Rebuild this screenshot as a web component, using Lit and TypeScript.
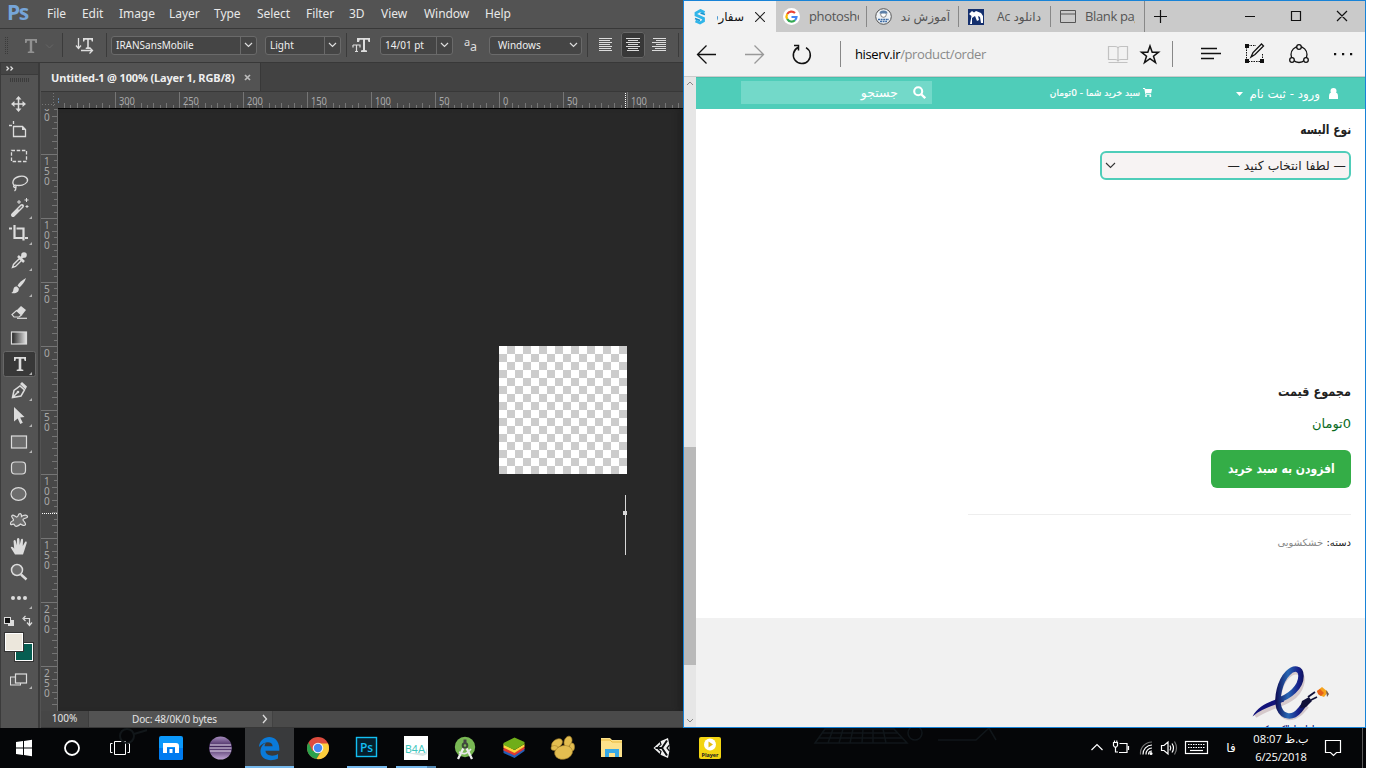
import { LitElement, html, svg, css } from "lit";
import { customElement } from "lit/decorators.js";

const range = (n: number) => Array.from({ length: n }, (_, i) => i);

/* ---------- Photoshop tools, each drawn in a 38x26 cell ---------- */
const corner = svg`<path d="M32 24h-3l3-3z" fill="#b4b4b4"/>`;
const tools = [
  { icon: svg`<path d="M18.500 7v12M12.500 13h12" stroke="#dcdcdc" stroke-width="1.500" fill="none"/><path d="M18.500 5l3 3.500h-6zM18.500 21l3-3.500h-6zM11 13l3.500-3v6zM26 13l-3.500-3v6z" fill="#dcdcdc"/>`, more: false },
  { icon: svg`<path d="M13.500 4v3M9 8.500h3M13.500 9.500h9l3 3v7h-12z" stroke="#dcdcdc" stroke-width="1.300" fill="none"/><path d="M22 9v4h4z" fill="#dcdcdc"/>`, more: false },
  { icon: svg`<rect x="11.500" y="7.500" width="15" height="11" fill="none" stroke="#dcdcdc" stroke-width="1.300" stroke-dasharray="3.500 1.700"/>`, more: false },
  { icon: svg`<path d="M15 17c-4-3-2-8 4-9.500s10 2 8 5.500c-2 3-7 4-11 3.200-2-.5-3 .8-2 2s3-.5 1.500-1.500M16 18c0 2 0 3-1.500 4" stroke="#dcdcdc" stroke-width="1.300" fill="none"/>`, more: false },
  { icon: svg`<path d="M13 20l9-9" stroke="#dcdcdc" stroke-width="4" stroke-linecap="round"/><path d="M18.500 14.500l3.500-3.500" stroke="#6a6a6a" stroke-width="1.500"/><path d="M19 5v4M17 7h4M26.500 3v4M24.500 5h4M27 10v3M25.500 11.500h3" stroke="#dcdcdc" stroke-width="1"/>`, more: true },
  { icon: svg`<path d="M14.500 4v13h9M9 7.500h3M16.500 7.500h7v12M25 17h3" stroke="#dcdcdc" stroke-width="2.200" fill="none"/>`, more: true },
  { icon: svg`<path d="M12.500 20.500l1-3 6-6 2 2-6 6z" fill="none" stroke="#dcdcdc" stroke-width="1.400"/><path d="M18 9l6 6M20.500 11.500l3.500-3.500" stroke="#dcdcdc" stroke-width="2.500"/><circle cx="24" cy="8" r="2.800" fill="#dcdcdc"/>`, more: true },
  { icon: svg`<path d="M26 5c-4 2-7 5-8.500 7.500l2 2C22 12 25 9 26 5z" fill="#dcdcdc"/><path d="M17 13.500c-2.500-.5-3.500 1.500-3.700 3.500-.2 1.500-1 2.500-2 3 4 1 8-.5 7.500-4.500z" fill="#dcdcdc"/>`, more: true },
  { icon: svg`<path d="M21 7l5 4-4 5h-6l-2-2z" fill="#dcdcdc"/><path d="M16.500 11.500l5 4.500-2.500 2h-5l-2-2.500z" fill="#535353" stroke="#dcdcdc" stroke-width="1.200"/><path d="M17 19.300h10" stroke="#dcdcdc" stroke-width="1.200"/>`, more: false },
  { icon: svg`<defs><linearGradient id="g"><stop offset="0" stop-color="#222"/><stop offset="1" stop-color="#e4e4e4"/></linearGradient></defs><rect x="11.500" y="7" width="15" height="12" fill="url(#g)" stroke="#dcdcdc" stroke-width="1.200"/>`, more: false },
  { icon: svg`<rect x="3.500" y=".5" width="32" height="25" rx="2" fill="#383838" stroke="#676767"/><path d="M14 6h12v4h-1.300l-.7-2.300h-2.700v10.500l2 .6V20h-6.600v-1.200l2-.6V7.700H16L15.300 10H14z" fill="#dcdcdc"/>`, more: true },
  { icon: svg`<path d="M12.500 20.500l1.500-7 6-4.500 4.500 4-3.500 6zM12.500 20.500l5-5" stroke="#dcdcdc" stroke-width="1.500" fill="none"/><circle cx="18" cy="15" r="1.300" fill="#dcdcdc"/><path d="M20 7l2-2 5 4.500-1.500 3z" fill="#dcdcdc"/>`, more: true },
  { icon: svg`<path d="M14 4l10.500 10-4.300.4 2.600 5.400-2.600 1.200-2.500-5.400L14 18.500z" fill="#dcdcdc"/>`, more: true },
  { icon: svg`<rect x="11.500" y="7" width="15" height="12" fill="#6d6d6d" stroke="#dcdcdc" stroke-width="1.200"/>`, more: true },
  { icon: svg`<rect x="11.500" y="7" width="14" height="12" rx="3.500" fill="#6d6d6d" stroke="#dcdcdc" stroke-width="1.200"/>`, more: false },
  { icon: svg`<ellipse cx="18.500" cy="13" rx="7.500" ry="6.300" fill="#6d6d6d" stroke="#dcdcdc" stroke-width="1.200"/>`, more: false },
  { icon: svg`<path d="M19 7c2-1 2.500.5 2.500 2.500 2-1.500 5.500-2 6 0s-4 1.500-4.500 3 3 2.500 2.500 5c-1 2-3.500.5-5-.5-2 2-5 3.500-6 1s-4 1.500-4-1.500 3-2 3-3.500-3-3-1.500-4.500 3.500 2 5 1.500S18 8 19 7z" fill="#6d6d6d" stroke="#dcdcdc" stroke-width="1.200"/>`, more: false },
  { icon: svg`<path d="M15 21.500l-4.300-7c1-1.500 2.500-.3 3.500 1.200L13.500 8c.8-1.500 2-1 2.300.2l.9 4L17 6c.5-1.400 2-1.300 2.400 0l.3 6 1.300-5.500c.6-1.200 2-.9 2 .5L22.800 13l2.200-4c1-1 2-.3 1.700 1L24.500 17 23 21.500z" fill="#dcdcdc"/>`, more: false },
  { icon: svg`<circle cx="17" cy="11" r="5.500" fill="#6d6d6d" stroke="#dcdcdc" stroke-width="1.500"/><path d="M21 15.500l5.500 5" stroke="#dcdcdc" stroke-width="2.400"/>`, more: false },
  { icon: svg`<circle cx="13" cy="13" r="2" fill="#dcdcdc"/><circle cx="19" cy="13" r="2" fill="#dcdcdc"/><circle cx="25" cy="13" r="2" fill="#dcdcdc"/>`, more: true },
];

const down = (c: string) => html`<svg width="9" height="6" viewBox="0 0 9 6"><path d="M1 1l3.500 3.500L8 1" fill="none" stroke=${c} stroke-width="1.200"/></svg>`;
const lines = (rows: number[][]) => html`<svg width="24" height="26" viewBox="0 0 24 26">${rows.map(([x, w], i) => svg`<rect x=${x} y=${6 + i * 2} width=${w} height="1" fill="#dcdcdc"/>`)}</svg>`;

@customElement("photoshop-window")
export class PhotoshopWindow extends LitElement {
  static styles = css`
    :host { display: grid; grid-template-rows: 28px 35px 1fr; width: 683px; height: 728px; background: #535353; color: #dedede; font: 11px "Noto Sans", sans-serif; overflow: hidden; box-sizing: border-box; }
    svg { display: block; flex: none; }
    .menu { display: flex; align-items: center; font-size: 12px; color: #e8e8e8; letter-spacing: -.05px; padding-bottom: 1px; box-sizing: border-box; }
    .logo { width: 40px; padding-left: 7px; box-sizing: border-box; font: bold 21px/27px "Open Sans", sans-serif; color: #76a5d8; letter-spacing: -1.500px; margin-top: -2px; }
    .menu .m { box-sizing: border-box; flex: none; white-space: nowrap; }
    .w0 { width: 35px; margin-left: 7px; } .w1 { width: 37px; } .w2 { width: 50px; } .w3 { width: 45px; } .w4 { width: 43px; }
    .w5 { width: 49px; } .w6 { width: 43px; } .w7 { width: 32px; } .w8 { width: 43px; } .w9 { width: 61px; } .w10 { width: 50px; }
    .options { border-top: 1px solid #383838; border-bottom: 1px solid #383838; display: flex; align-items: center; padding-bottom: 1px; box-sizing: border-box; }
    .box { height: 19px; border: 1px solid #6a6a6a; border-radius: 3px; background: #454545; display: flex; align-items: center; box-sizing: border-box; color: #f0f0f0; font-size: 10px; }
    .box .v { flex: 1; padding-left: 4px; white-space: nowrap; }
    .box .a { width: 15px; height: 100%; border-left: 1px solid #6a6a6a; display: flex; align-items: center; justify-content: center; }
    .box .plain { border: 0; }
    .sep { width: 1px; height: 24px; background: #3b3b3b; flex: none; }
    .font { width: 146px; margin: 0 8px 0 4px; }
    .weight { width: 76px; margin-right: 5px; }
    .size { width: 73px; margin: 0 11px 0 9px; }
    .aa { width: 93px; margin: 0 5px 0 11px; }
    .aa .v { padding-left: 8px; }
    .on { background: #383838; border-radius: 3px; outline: 1px solid #676767; outline-offset: -1px; margin: 0 2px 0 9px; }
    .last { margin-left: 7px; }
    .main { display: grid; grid-template-columns: 41px 1fr; min-height: 0; }
    .tools { border-right: 2px solid #3b3b3b; border-left: 1px solid #3b3b3b; box-sizing: border-box; width: 40px; }
    .head { height: 12px; background: #454545; border-bottom: 1px solid #3b3b3b; display: flex; align-items: center; padding-left: 4px; box-sizing: border-box; }
    .grip { height: 16px; display: flex; justify-content: center; padding-top: 3px; box-sizing: border-box; }
    .doc { display: grid; grid-template-rows: 29px 17px 602px 17px; min-width: 0; }
    .tabs { background: #424242; border-bottom: 1px solid #383838; display: flex; }
    .tab { width: 220px; box-sizing: border-box; background: #535353; border-right: 1px solid #383838; padding-left: 10px; display: flex; align-items: center; gap: 9px; font-weight: bold; font-size: 11px; letter-spacing: -.15px; color: #efefef; white-space: nowrap; }
    .view { display: grid; grid-template-columns: 17px 1fr; }
    .canvas { background: #282828; position: relative; box-shadow: inset -8px 0 8px -6px #1c1c1c; }
    .art { position: absolute; left: 441px; top: 237px; width: 128px; height: 128px; background: repeating-conic-gradient(#ccc 0 25%, #fff 0 50%) 0 0 / 16px 16px; }
    .caret { position: absolute; left: 565px; top: 386px; }
    .status { display: flex; background: #4a4a4a; font-size: 10px; border-bottom: 1px solid #383838; color: #e4e4e4; box-sizing: border-box; }
    .status .zoom { width: 47px; background: #464646; text-align: center; line-height: 15px; border-right: 1px solid #3d3d3d; }
    .status .info { width: 184px; background: #535353; display: flex; align-items: center; justify-content: space-between; padding: 0 4px 0 43px; box-sizing: border-box; border-right: 1px solid #424242; letter-spacing: -.15px; }
    .lab { font: 10px "Noto Sans", sans-serif; fill: #a9a9a9; }
  `;

  hRuler() {
    const majors = range(9).map((i) => ({ x: 74 + i * 64, n: Math.abs(300 - i * 50) }));
    return html`<svg width="642" height="17" viewBox="0 0 642 17">
      <rect width="642" height="17" fill="#484848"/>
      <path d="M1 12.500h15M12.500 1v15" stroke="#777" stroke-dasharray="1 2"/>
      <path d="M17.500 6v6" stroke="#5f86ad" stroke-dasharray="2 1"/>
      ${range(98).map((i) => { const x = Math.round(74 + (i - 8) * 6.4); return x < 17 ? null : svg`<rect x=${x} y=${i % 2 ? 13 : 11} width="1" height="5" fill="#757575"/>`; })}
      ${majors.map((m) => svg`<rect x=${m.x} y="0" width="1" height="16" fill="#757575"/><text class="lab" x=${m.x + 4} y="13" textLength=${String(m.n).length * 5.300} lengthAdjust="spacingAndGlyphs">${m.n}</text>`)}
      <path d="M584.500 1v15" stroke="#fff" stroke-dasharray="1 1"/>
      <rect y="16" x="17" width="625" height="1" fill="#000"/></svg>`;
  }

  vRuler() {
    const majors = range(10).map((i) => ({ y: -19 + i * 64, n: String(Math.abs(200 - i * 50)) }));
    return html`<svg width="17" height="602" viewBox="0 0 17 602">
      <rect width="17" height="602" fill="#484848"/>
      ${range(97).map((i) => svg`<rect x=${i % 2 ? 13 : 11} y=${Math.round(-19 + i * 6.4)} width="5" height="1" fill="#757575"/>`)}
      ${majors.map((m) => svg`<rect y=${m.y} x="0" width="17" height="1" fill="#757575"/>${m.n.split("").map((d, k) => m.y < 0 && k === 0 ? null : svg`<text class="lab" x="3" y=${m.y + 11 + k * 10}>${d}</text>`)}`)}
      <path d="M1 404.500h15" stroke="#fff" stroke-dasharray="1 1"/>
      <rect x="16" width="1" height="602" fill="#6d6d6d"/></svg>`;
  }

  render() {
    const menus = ["File", "Edit", "Image", "Layer", "Type", "Select", "Filter", "3D", "View", "Window", "Help"];
    return html`
      <div class="menu"><span class="logo">Ps</span>${menus.map((m, i) => html`<span class="m w${i}">${m}</span>`)}</div>
      <div class="options">
        <svg width="62" height="32" viewBox="0 0 62 32"><path d="M5.500 8v18M7.500 8v18" stroke="#3b3b3b" stroke-dasharray="1 1"/><path d="M25 10h12v4h-1.500l-.8-2.300h-2.500v10.500l2 .6V24h-6.400v-1.200l2-.6V11.700h-2.500l-.8 2.300H25z" fill="#919191"/><path d="M46 15.500l3.500 3.500 3.500-3.500" stroke="#666" fill="none"/></svg>
        <div class="sep"></div>
        <svg width="43" height="32" viewBox="0 0 43 32"><path d="M20 9h10v3.500h-1.200l-.6-1.800h-2.400v7.600l1.500.5v1.200h-4.600v-1.200l1.500-.5v-7.600h-2.400l-.6 1.800H20z" fill="#dedede"/><path d="M15.500 9v10M13 16.500l2.500 3 2.500-3M18 21.500h11M26.500 18.500l3 3-3 3" stroke="#dedede" stroke-width="1.300" fill="none"/></svg>
        <div class="sep"></div>
        <div class="box font"><span class="v">IRANSansMobile</span><span class="a">${down("#dedede")}</span></div>
        <div class="box weight"><span class="v">Light</span><span class="a">${down("#dedede")}</span></div>
        <div class="sep"></div>
        <svg width="24" height="32" viewBox="0 0 24 32"><path d="M10 9h13v4h-1.500l-.7-2.200H18V21l2 .6V23h-6v-1.400l2-.6V10.800h-3.200L12 13h-2z" fill="#dedede"/><path d="M6 16h7v2.500M6 18.500V16M9.500 16v6.500M8 22.500h3" stroke="#dedede" stroke-width="1.200" fill="none"/></svg>
        <div class="box size"><span class="v">14/01 pt</span><span class="a">${down("#dedede")}</span></div>
        <svg width="14" height="32" viewBox="0 0 14 32"><text x="0" y="17" font-size="11" fill="#dedede">a</text><text x="6" y="22" font-size="12.500" fill="#dedede">a</text></svg>
        <div class="box aa"><span class="v">Windows</span><span class="a plain">${down("#dedede")}</span></div>
        <div class="sep"></div>
        ${lines([[11, 13], [11, 11], [11, 14], [11, 11], [11, 14], [11, 12], [11, 14]])}
        <div class="on">${lines([[5, 14], [7, 10], [5, 14], [7, 10], [5, 14], [7, 10], [6, 12]])}</div>
        ${lines([[6, 13], [9, 10], [5, 14], [9, 10], [5, 14], [8, 11], [5, 14]])}
        <div class="sep last"></div>
      </div>
      <div class="main">
        <div class="tools">
          <div class="head"><svg width="10" height="7" viewBox="0 0 10 7"><path d="M1.500 1.500l2 2-2 2M5.500 1.500l2 2-2 2" fill="none" stroke="#e0e0e0" stroke-width="1.300"/></svg></div>
          <div class="grip"><svg width="20" height="4" viewBox="0 0 20 4"><path d="M0 1h20M0 3h20" stroke="#3b3b3b" stroke-dasharray="1 1" stroke-width="2"/></svg></div>
          ${tools.map((t) => html`<svg width="37" height="26" viewBox="1 0 37 26">${t.icon}${t.more ? corner : null}</svg>`)}
          <svg width="37" height="86" viewBox="1 611 37 86">
            <rect x="8" y="620" width="6" height="6" fill="#dcdcdc"/><rect x="4.500" y="617.500" width="6" height="6" fill="#111" stroke="#dcdcdc"/>
            <path d="M24 618.500h5.500v6M25.500 616l-2.500 2.500 2.500 2.500M27 622.500l2.500 3 2.500-3" stroke="#dcdcdc" stroke-width="1.200" fill="none"/>
            <rect x="14" y="642" width="20" height="20" fill="#333"/><rect x="15.500" y="643.500" width="17" height="17" fill="#065e52" stroke="#fff"/>
            <rect x="4" y="632" width="20" height="20" fill="#333"/><rect x="5.500" y="633.500" width="17" height="17" fill="#ece7dc" stroke="#fff"/>
            <rect x="10.500" y="677" width="10" height="8" fill="#5f5f5f" stroke="#dcdcdc"/><rect x="15.500" y="674" width="11" height="9" fill="#535353" stroke="#dcdcdc" stroke-width="1.200"/><path d="M32 689h-3l3-3z" fill="#b4b4b4"/>
          </svg>
        </div>
        <div class="doc">
          <div class="tabs"><div class="tab">Untitled-1 @ 100% (Layer 1, RGB/8)<svg width="7" height="7" viewBox="0 0 7 7"><path d="M1 1l5 5M6 1L1 6" stroke="#bbb" stroke-width="1.700"/></svg></div></div>
          ${this.hRuler()}
          <div class="view">${this.vRuler()}
            <div class="canvas"><div class="art"></div>
              <svg class="caret" width="5" height="60" viewBox="0 0 5 60"><path d="M2.500 0v60" stroke="#d8d8d8"/><rect y="16" width="4" height="4" fill="#d8d8d8"/></svg></div>
          </div>
          <div class="status"><div class="zoom">100%</div><div class="info"><span>Doc: 48/0K/0 bytes</span><svg width="6" height="10" viewBox="0 0 6 10"><path d="M1 1l3.500 4L1 9" fill="none" stroke="#ddd" stroke-width="1.300"/></svg></div></div>
        </div>
      </div>`;
  }
}

@customElement("browser-window")
export class BrowserWindow extends LitElement {
  static styles = css`
    :host { display: grid; grid-template-rows: 31px 45px 1fr; width: 683px; height: 728px; box-sizing: border-box; border: 1px solid #1883d7; background: #fff; font: 13px "Open Sans", "DejaVu Sans", sans-serif; color: #000; overflow: hidden; }
    svg { display: block; flex: none; }
    .tabs { background: #cacaca; display: flex; align-items: center; }
    .tab { display: flex; align-items: center; height: 21px; padding-left: 7px; box-sizing: border-box; color: #555; border-right: 1px solid #888; gap: 9px; }
    .tab .t { width: 50px; overflow: hidden; white-space: nowrap; line-height: 21px; letter-spacing: -.35px; }
    .tab .ar { direction: rtl; font-size: 12px; letter-spacing: 0; }
    .active { width: 92px; height: 31px; background: #f2f2f2; border: 0; padding-left: 8px; color: #111; }
    .active .t { width: 27px; }
    .active .close { margin-left: 2px; }
    .t2 { width: 91px; } .t3 { width: 92px; padding-left: 8px; gap: 8px; } .t4 { width: 92px; padding-left: 9px; } .t5 { width: 94px; height: 31px; padding-left: 9px; }
    .t4 .t { width: 48px; }
    .bar { background: #f2f2f2; border-bottom: 1px solid #ccc; display: flex; align-items: center; }
    .url { width: 252px; font-size: 13px; letter-spacing: -.38px; padding-left: 14px; color: #8a8a8a; white-space: nowrap; box-sizing: border-box; }
    .url b { font-weight: normal; color: #000; }
    .sep { width: 1px; height: 26px; background: #888; }
    .body { display: grid; grid-template-columns: 12px 1fr; min-height: 0; }
    .scroll { background: #e6e6e6; display: flex; flex-direction: column; align-items: center; justify-content: space-between; padding: 4px 0; position: relative; }
    .thumb { position: absolute; left: 0; top: 370px; width: 12px; height: 218px; background: #b9b9b9; }
    .page { direction: rtl; font-family: "DejaVu Sans", sans-serif; display: flex; flex-direction: column; min-width: 0; }
    .top { height: 32px; background: #4fcdb9; color: #fff; display: flex; align-items: center; box-sizing: border-box; border-top: 1px solid #47bfac; }
    .user { display: flex; align-items: center; gap: 9px; margin-right: 27px; width: 101px; font-size: 11.800px; white-space: nowrap; }
    .user .caret { margin-right: -2px; }
    .basket { display: flex; align-items: center; gap: 3px; margin-right: 85px; width: 102px; font-size: 9.500px; white-space: nowrap; margin-top: -3px; -webkit-text-stroke: .2px #fff; }
    .basket .n { transform: scaleX(.95); transform-origin: right; }
    .search { width: 191px; height: 23px; background: #73d9c9; margin-right: 118px; display: flex; align-items: center; gap: 15px; padding-right: 6px; box-sizing: border-box; font-size: 12.500px; margin-top: -2px; }
    .form { height: 509px; padding: 11px 14px 0 0; box-sizing: border-box; display: flex; flex-direction: column; align-items: flex-start; color: #222; }
    .label { font-weight: bold; font-size: 13px; line-height: 20px; transform: scaleX(.82); transform-origin: right; }
    .total { transform: scaleX(.87); }
    .select { width: 251px; height: 29px; box-sizing: border-box; border: 2px solid #4fcdb9; border-radius: 6px; background: #f7f3f3; margin: 11px 0 202px; display: flex; align-items: center; justify-content: space-between; padding: 0 3px; font-size: 12.400px; }
    .price { font-size: 13px; color: #0a6b1e; line-height: 20px; margin: 12px 0 16px; }
    .buy { width: 140px; height: 38px; border-radius: 6px; background: #34ad47; color: #fff; font-weight: bold; font-size: 13px; display: flex; align-items: center; justify-content: center; white-space: nowrap; padding-bottom: 2px; box-sizing: border-box; }
    .buy .n { transform: scaleX(.83); }
    .rule { width: 383px; height: 1px; background: #eee; margin: 26px 0 18px; }
    .cat { font-size: 10px; line-height: 20px; color: #888; }
    .cat b { font-weight: normal; color: #222; }
    .foot { flex: 1; background: #f1f1f1; display: flex; padding-right: 33px; align-items: flex-end; }
  `;

  render() {
    return html`
      <div class="tabs">
        <div class="tab active">
          <svg width="16" height="16" viewBox="0 0 16 16"><path d="M12.500 3.500L8.500 1.500 4 4v2l7.500 3.500V12L8 14l-4.500-2" fill="none" stroke="#2fb5e9" stroke-width="2.800"/><path d="M13 5.500L8.500 4M3 9.500l5 2" stroke="#1593cf" stroke-width="1.600"/></svg>
          <span class="t ar">سفارش</span>
          <svg class="close" width="10" height="10" viewBox="0 0 10 10"><path d="M0 0l10 10M10 0L0 10" stroke="#222" stroke-width="1.100"/></svg>
        </div>
        <div class="tab t2"><svg width="17" height="17" viewBox="0 0 17 17"><circle cx="8.500" cy="8.500" r="8.500" fill="#fff"/><g fill="none" stroke-width="2.200"><path d="M12 5A5 5 0 0 0 4.200 6" stroke="#ea4335"/><path d="M4.200 6a5 5 0 0 0 0 5" stroke="#fbbc05"/><path d="M4.200 11A5 5 0 0 0 12 12.200" stroke="#34a853"/><path d="M12 12.200A5 5 0 0 0 13.500 9H8.500" stroke="#4285f4"/></g></svg><span class="t">photoshop</span></div>
        <div class="tab t3"><svg width="17" height="17" viewBox="0 0 17 17"><circle cx="8.500" cy="8.500" r="7.800" fill="#eef2f6" stroke="#555" stroke-width="1"/><circle cx="8.500" cy="6.500" r="2.800" fill="#fff" stroke="#666" stroke-width=".8"/><path d="M4.500 5.500a4 3 0 0 1 8 0z" fill="#5b7fa8"/><path d="M3 11.500h11M5 13.500h7" stroke="#3d6ca5" stroke-width="1.300" stroke-dasharray="2 .6"/></svg><span class="t ar">آموزش ند</span></div>
        <div class="tab t4"><svg width="16" height="16" viewBox="0 0 16 16"><rect width="16" height="16" fill="#15306e"/><path d="M1 5l3-3 2 1.500L8 2l5 2 2 3v7h-2l-1-6-2-1 1 4-2 1-2-5-3 2v6H2l1.500-8z" fill="#fff"/></svg><span class="t ar">دانلود Ac</span></div>
        <div class="tab t5"><svg width="16" height="14" viewBox="0 0 16 14"><path d="M.5.500h15v12H.5zM.5 4h15" fill="none" stroke="#555"/></svg><span class="t">Blank page</span></div>
        <svg width="220" height="31" viewBox="1145 1 220 31"><path d="M1154 16.500h13M1160.500 10v13M1245 16.500h10M1291.500 11.500h9v9h-9zM1337 11l10 10M1347 11l-10 10" fill="none" stroke="#111" stroke-width="1.200"/></svg>
      </div>
      <div class="bar">
        <svg width="156" height="44" viewBox="684 32 156 44"><path d="M716 54.500h-18M706.500 45.500l-9 9 9 9" fill="none" stroke="#111" stroke-width="1.300"/><path d="M745 54.500h18M754.500 45.500l9 9-9 9" fill="none" stroke="#999" stroke-width="1.300"/><path d="M798 47.500a8.500 8.500 0 1 0 8 .2M794 45.500h4.500v5" fill="none" stroke="#111" stroke-width="1.500"/></svg>
        <div class="sep"></div>
        <div class="url"><b>hiserv.ir</b>/product/order</div>
        <svg width="272" height="44" viewBox="1093 32 272 44">
          <path d="M1108.500 46.500h6.500c2 0 3 1 3 2v13c0-1.500-1-2-3-2h-6.500zM1127.500 46.500h-6.500c-2 0-3 1-3 2v13c0-1.500 1-2 3-2h6.500zM1108.500 62.500h19" fill="none" stroke="#c2c2c2" stroke-width="1.200"/>
          <path d="M1150 46l2.200 6.200h6.300l-5 4 2 6.300-5.500-3.900-5.500 3.900 2-6.300-5-4h6.300z" fill="none" stroke="#111" stroke-width="1.500"/>
          <path d="M1172.500 41v26" stroke="#888"/>
          <path d="M1201 48.500h16M1201 53.500h20M1201 58.500h13" stroke="#111" stroke-width="1.300"/>
          <path d="M1246.500 47v14M1246 61.500h16M1262.500 54v7M1248 45.500h8" stroke="#111" stroke-dasharray="1.500 1" fill="none"/><path d="M1245 44h4v4h-4zM1245 59h4v4h-4zM1260 59h4v4h-4z" fill="#111"/><path d="M1251 57l2-4.500 8.500-8.500 2 2-8.500 8.500z" fill="#f2f2f2" stroke="#111" stroke-width="1.300"/>
          <g fill="none" stroke="#111" stroke-width="1.300"><circle cx="1299" cy="54.500" r="8"/><g fill="#f2f2f2"><circle cx="1299" cy="47" r="2.300"/><circle cx="1292" cy="60" r="2.300"/><circle cx="1306" cy="60" r="2.300"/></g></g>
          <path d="M1334 53h2.200v2.200h-2.200zM1342 53h2.200v2.200h-2.200zM1350 53h2.200v2.200h-2.200z" fill="#111"/>
        </svg>
      </div>
      <div class="body">
        <div class="scroll"><svg width="8" height="5" viewBox="0 0 8 5"><path d="M1 4l3-3 3 3" fill="none" stroke="#888"/></svg><div class="thumb"></div><svg width="8" height="5" viewBox="0 0 8 5"><path d="M1 1l3 3 3-3" fill="none" stroke="#888"/></svg></div>
        <div class="page">
          <div class="top">
            <div class="user"><svg width="9" height="11" viewBox="0 0 9 11"><circle cx="4.500" cy="3" r="3" fill="#fff"/><path d="M0 11V8.500Q0 5 2 4.800h5Q9 5 9 8.500V11z" fill="#fff"/></svg><span>ورود - ثبت نام</span><svg class="caret" width="7" height="4" viewBox="0 0 7 4"><path d="M0 0h7L3.500 4z" fill="#fff"/></svg></div>
            <div class="basket"><svg width="9" height="9" viewBox="0 0 9 9"><path d="M0 0h2l.3 1H9L8.200 5.200H3l.2.800H8v.8H2.400L1.400 1H0z" fill="#fff"/><circle cx="3" cy="8" r="1" fill="#fff"/><circle cx="7.300" cy="8" r="1" fill="#fff"/></svg><span class="n">سبد خرید شما - 0تومان</span></div>
            <div class="search"><svg width="13" height="13" viewBox="0 0 13 13"><circle cx="5.200" cy="5.200" r="4" fill="none" stroke="#fff" stroke-width="2.100"/><path d="M8.200 8.200l4 4" stroke="#fff" stroke-width="2.300"/></svg><span>جستجو</span></div>
          </div>
          <div class="form">
            <div class="label">نوع البسه</div>
            <div class="select"><span>— لطفا انتخاب کنید —</span><svg width="11" height="7" viewBox="0 0 11 7"><path d="M1 1l4.500 4.500L10 1" fill="none" stroke="#333" stroke-width="1.100"/></svg></div>
            <div class="label total">مجموع قیمت</div>
            <div class="price">0تومان</div>
            <div class="buy"><span class="n">افزودن به سبد خرید</span></div>
            <div class="rule"></div>
            <div class="cat"><b>دسته:</b> خشکشویی</div>
          </div>
          <div class="foot"><svg width="80" height="62" viewBox="1253 665 80 62">
            <defs><linearGradient id="e"><stop offset="0" stop-color="#101058"/><stop offset=".4" stop-color="#2767b4"/><stop offset=".75" stop-color="#18218a"/><stop offset="1" stop-color="#0c0c48"/></linearGradient></defs>
            <path d="M1256 716c12-9 24-9 36-17 11-7 15-22 8-26-7-3-16 5-19 18-3 14-1 26 9 27 8 0 13-6 18-12" stroke="#d5c9cb" stroke-width="4.500" fill="none"/>
            <path d="M1253.500 716.500C1260 704 1273 701 1284 697l1 4.500c-10 4-21 6-31.500 15z" fill="#12127a"/>
            <path d="M1277 701c14-4 25-14 25-25 0-8-7-9-13-3-8 8-12 25-9 35 4 10 14 10 20 3 3-3 4-6 7-8" stroke="url(#e)" stroke-width="5.500" fill="none"/>
            <path d="M1303 701l7-4 3 4-6 6-6 1z" fill="#101038"/><path d="M1309 697l7-5M1312 700l6-3" stroke="#101038" stroke-width="1.800"/>
            <path d="M1318 691l5-4 6 5-4 5-5-2z" fill="#f6a31c"/><path d="M1318 691l3-2 4 4-3 3-3-2z" fill="#e65f19"/><path d="M1327 690l3 4-2 3z" fill="#6b5a52"/>
            <text x="1291" y="731.500" text-anchor="middle" direction="rtl" font-size="9" font-weight="bold" fill="#171772" font-family="DejaVu Sans" textLength="60" lengthAdjust="spacingAndGlyphs">نماد اعتماد الکترونیکی</text>
          </svg></div>
        </div>
      </div>`;
  }
}

const apps = [
  svg`<rect x="12" y="8" width="24" height="24" rx="2" fill="#0b98fb"/><path d="M12 20h24v10q0 2-2 2H14q-2 0-2-2z" fill="#007bf0"/><path d="M16 25V15h13q3 0 3 3v7h-4v-6h-8v6zM22.500 21h3v4h-3z" fill="#fff"/>`,
  svg`<defs><linearGradient id="ec" x2="0" y2="1"><stop offset="0" stop-color="#a58abc"/><stop offset=".45" stop-color="#3d2358"/><stop offset="1" stop-color="#bfa5d4"/></linearGradient></defs><circle cx="24.500" cy="20" r="11.500" fill="url(#ec)"/><path d="M14 17h21M13.500 20h22M14 23h21" stroke="#eee4f5" stroke-width="1.200"/>`,
  svg`<path d="M14 19c.6-13 20-14.500 20.300 1.500v2.300H20.500c.3 5.500 8.500 6 12.500 3.200v4.500c-7 3.500-17.500 1.500-17.500-7 0-4.500 2.500-7.500 5.500-9-1 1.300-1.300 2.600-1.400 3.800h8c0-5.500-8.600-5.300-13.600.7z" fill="#0a7ad9"/>`,
  svg`<circle cx="24" cy="20" r="11" fill="#dd4b3e"/><path d="M14.500 14.500A11 11 0 0 0 22.500 31l5-9-9 1z" fill="#2ba14b"/><path d="M22.500 31A11 11 0 0 0 34 15.500H24l4 7z" fill="#fccd3b"/><circle cx="24" cy="20" r="5.300" fill="#f4f4f4"/><circle cx="24" cy="20" r="4.200" fill="#4587f2"/>`,
  svg`<rect x="13.500" y="9.500" width="20" height="19" fill="#061e2b" stroke="#13bff2" stroke-width="1.400"/><text x="23.500" y="24" text-anchor="middle" font-family="Open Sans" font-size="12" font-weight="600" fill="#13bff2">Ps</text>`,
  svg`<rect x="12" y="8" width="24" height="24" fill="#fff"/><path d="M15 25h18l2-5v6l-4 2z" fill="#d8e6e5"/><text x="13" y="25" font-family="Lato" font-size="12" fill="#3cc5bd" textLength="20" lengthAdjust="spacingAndGlyphs">B4A</text>`,
  svg`<circle cx="24" cy="19" r="10.200" fill="#79b854"/><path d="M23 19l-6 12M25 19l6 12" stroke="#eee" stroke-width="2.300"/><path d="M18 24c5 3 8 2 12-3" stroke="#e6e6e6" stroke-width="1.600" fill="none"/><circle cx="24" cy="17.500" r="2.300" fill="none" stroke="#3d4b38" stroke-width="2"/><path d="M22.500 11.500h3v4h-3z" fill="#444"/>`,
  svg`<path d="M13.500 21l11 6 10-7v3l-10 7-11-5z" fill="#235fb8"/><path d="M13.500 18.500l11 6 10-6.500v3l-10 6.500-11-5z" fill="#e03a32"/><path d="M13.500 16l11 6 10-6v2.500l-10 6.500-11-5.500z" fill="#fdd73b"/><path d="M13.500 15l11-5.500 10 4.500v2l-10 6-11-5z" fill="#6fae19"/>`,
  svg`<g fill="#e3bd50" stroke="#a8842c" stroke-width=".6"><ellipse cx="18" cy="15.500" rx="6" ry="4" transform="rotate(-35 18 15.500)"/><ellipse cx="15.500" cy="20" rx="3.500" ry="2.500"/><ellipse cx="29" cy="13.500" rx="3.800" ry="5.500" transform="rotate(20 29 13.500)"/><ellipse cx="33" cy="19" rx="2.500" ry="4"/><ellipse cx="24.500" cy="24.500" rx="9" ry="6.800" transform="rotate(-12 24 24)"/></g>`,
  svg`<path d="M13 10h9l2 2h10v17H13z" fill="#fce18b"/><path d="M13 12h9l2 2h10" stroke="#e9b93c" fill="none"/><path d="M17 29v-8h14v8h-4v-4h-6v4z" fill="#37a9e6"/>`,
  svg`<path d="M16.500 20L24 13l7-3 1.500 7.500v5L31 30l-7-3z" fill="#f2f2f2"/><path d="M25 20h-6.500M25 20l5-7.500M25 20l5 7.500" stroke="#0c0e10" stroke-width="2"/><path d="M23 13.500l1 3-3 2.500M23 26.500l1-3-3-2.500M32.500 17l-2.500 3 2.500 3" stroke="#0c0e10" stroke-width="1.200" fill="none"/>`,
  svg`<rect x="13" y="9" width="22" height="22" rx="2" fill="#f3d512"/><circle cx="24" cy="16.500" r="6" fill="#fff"/><path d="M22.500 13.500l4.500 3-4.500 3z" fill="#e3bd13"/><text x="24" y="28.500" text-anchor="middle" font-family="Open Sans" font-size="6" font-weight="bold" fill="#222" textLength="17" lengthAdjust="spacingAndGlyphs">Player</text>`,
];

@customElement("task-bar")
export class TaskBar extends LitElement {
  static styles = css`
    :host { display: flex; width: 1366px; height: 40px; background: #050608; color: #fff; font: 11px "Open Sans", "DejaVu Sans", sans-serif; }
    svg { display: block; flex: none; }
    .app { width: 49px; height: 40px; box-sizing: border-box; }
    .active { background: #393a3c; border-bottom: 2px solid #76b9ed; }
    .run { background: linear-gradient(#76b9ed, #76b9ed) 4px 38px / 40px 2px no-repeat; }
    .multi { background: linear-gradient(90deg, #76b9ed 31px, #5388b3 31px) 4px 38px / 40px 2px no-repeat; }
    .spacer { flex: 1; display: flex; justify-content: flex-start; padding-left: 75px; }
    .lang { width: 14px; padding-top: 11px; font-size: 12px; line-height: 17px; text-align: center; }
    .clock { width: 86px; text-align: center; line-height: 18px; padding-top: 2px; white-space: nowrap; letter-spacing: -.15px; font-size: 11.200px; }
    .end { width: 4px; border-left: 1px solid #5a5a5a; box-sizing: border-box; }
  `;
  render() {
    return html`
      <svg width="147" height="40" viewBox="0 0 147 40">
        <path d="M16 14l7-1v6.500h-7zM24 12.900l8-1.100v7.700h-8zM16 20.500h7V27l-7-1zM24 20.500h8v7.700L24 27z" fill="#fff"/>
        <circle cx="72" cy="20" r="7" fill="none" stroke="#fff" stroke-width="1.800"/>
        <path d="M114.500 13.500h11v13h-11zM112.500 15.500h-2v9h2M127.500 15.500h2v9h-2" fill="none" stroke="#fff"/>
        <g fill="none" stroke="#12171a" stroke-width="2"><circle cx="127" cy="8" r="7"/><path d="M134 6l20-6"/></g>
      </svg>
      ${apps.map((a, i) => html`<div class="app ${i === 2 ? "active" : i === 4 ? "run" : i === 5 ? "multi" : ""}"><svg width="49" height="38" viewBox="0 0 49 38">${a}</svg></div>`)}
      <div class="spacer"><svg width="190" height="40" viewBox="810 0 190 40"><g fill="none" stroke="#10161a" stroke-width="1.500"><path d="M825 1l-10 14h92l-13-14zM822 5h76M818 10h84M833 1l-5 14M843 1l-4 14M853 1l-3 14M863 1l-1 14M873 1v14M883 1l3 14"/><circle cx="915" cy="5" r="7"/><path d="M938 12h38l13-12 7 12"/></g></svg></div>
      <svg width="135" height="40" viewBox="1089 0 135 40">
        <g fill="none" stroke="#fff" stroke-width="1.200">
          <path d="M1091.500 22l5.500-5.500 5.500 5.500"/>
          <path d="M1119.500 15.500h7.500v9h-8M1128.500 18v4M1113.500 14.500h4v3l-1 1.500h-2l-1-1.500zM1114.500 12.500v2M1116.800 12.500v2M1115.500 19v5h2.500"/>
          <path d="M1148.500 26.500a3.500 3.500 0 0 1 3.500-3.500M1146 26.500a6 6 0 0 1 6-6.500M1143 26.500a9 9 0 0 1 9-9.500"/><path d="M1140.500 26.500a11.500 11.500 0 0 1 11.500-12.500" stroke="#777"/>
          <path d="M1161.500 17.500h2.500l4-3.500v12l-4-3.500h-2.500zM1170 17.500q1.500 2.500 0 5M1172 15.500q3 4.500 0 9"/><path d="M1174.500 13.500q4 6.500 0 13" stroke="#777"/>
          <rect x="1185.500" y="13.500" width="22" height="12"/><path d="M1188 16.500h17M1188 19.500h17" stroke-dasharray="1.500 1"/><path d="M1190 22.500h13"/>
        </g><circle cx="1151" cy="25.500" r="1.500" fill="#fff"/>
      </svg>
      <div class="lang">فا</div>
      <div class="clock"><div>08:07 ب.ظ</div><div>6/25/2018</div></div>
      <svg width="38" height="40" viewBox="1324 0 38 40"><path d="M1325.500 12.500h15v12h-4l-3 3-3-3h-5z" fill="none" stroke="#fff" stroke-width="1.200"/></svg>
      <div class="end"></div>`;
  }
}

@customElement("app-root")
export class AppRoot extends LitElement {
  static styles = css`
    :host { display: block; width: 1398px; height: 782px; background: #fff; overflow: hidden; }
    .screen { width: 1366px; height: 768px; display: grid; grid-template-rows: 728px 40px; }
    .windows { display: flex; }
  `;
  render() {
    return html`<div class="screen"><div class="windows"><photoshop-window></photoshop-window><browser-window></browser-window></div><task-bar></task-bar></div>`;
  }
}
